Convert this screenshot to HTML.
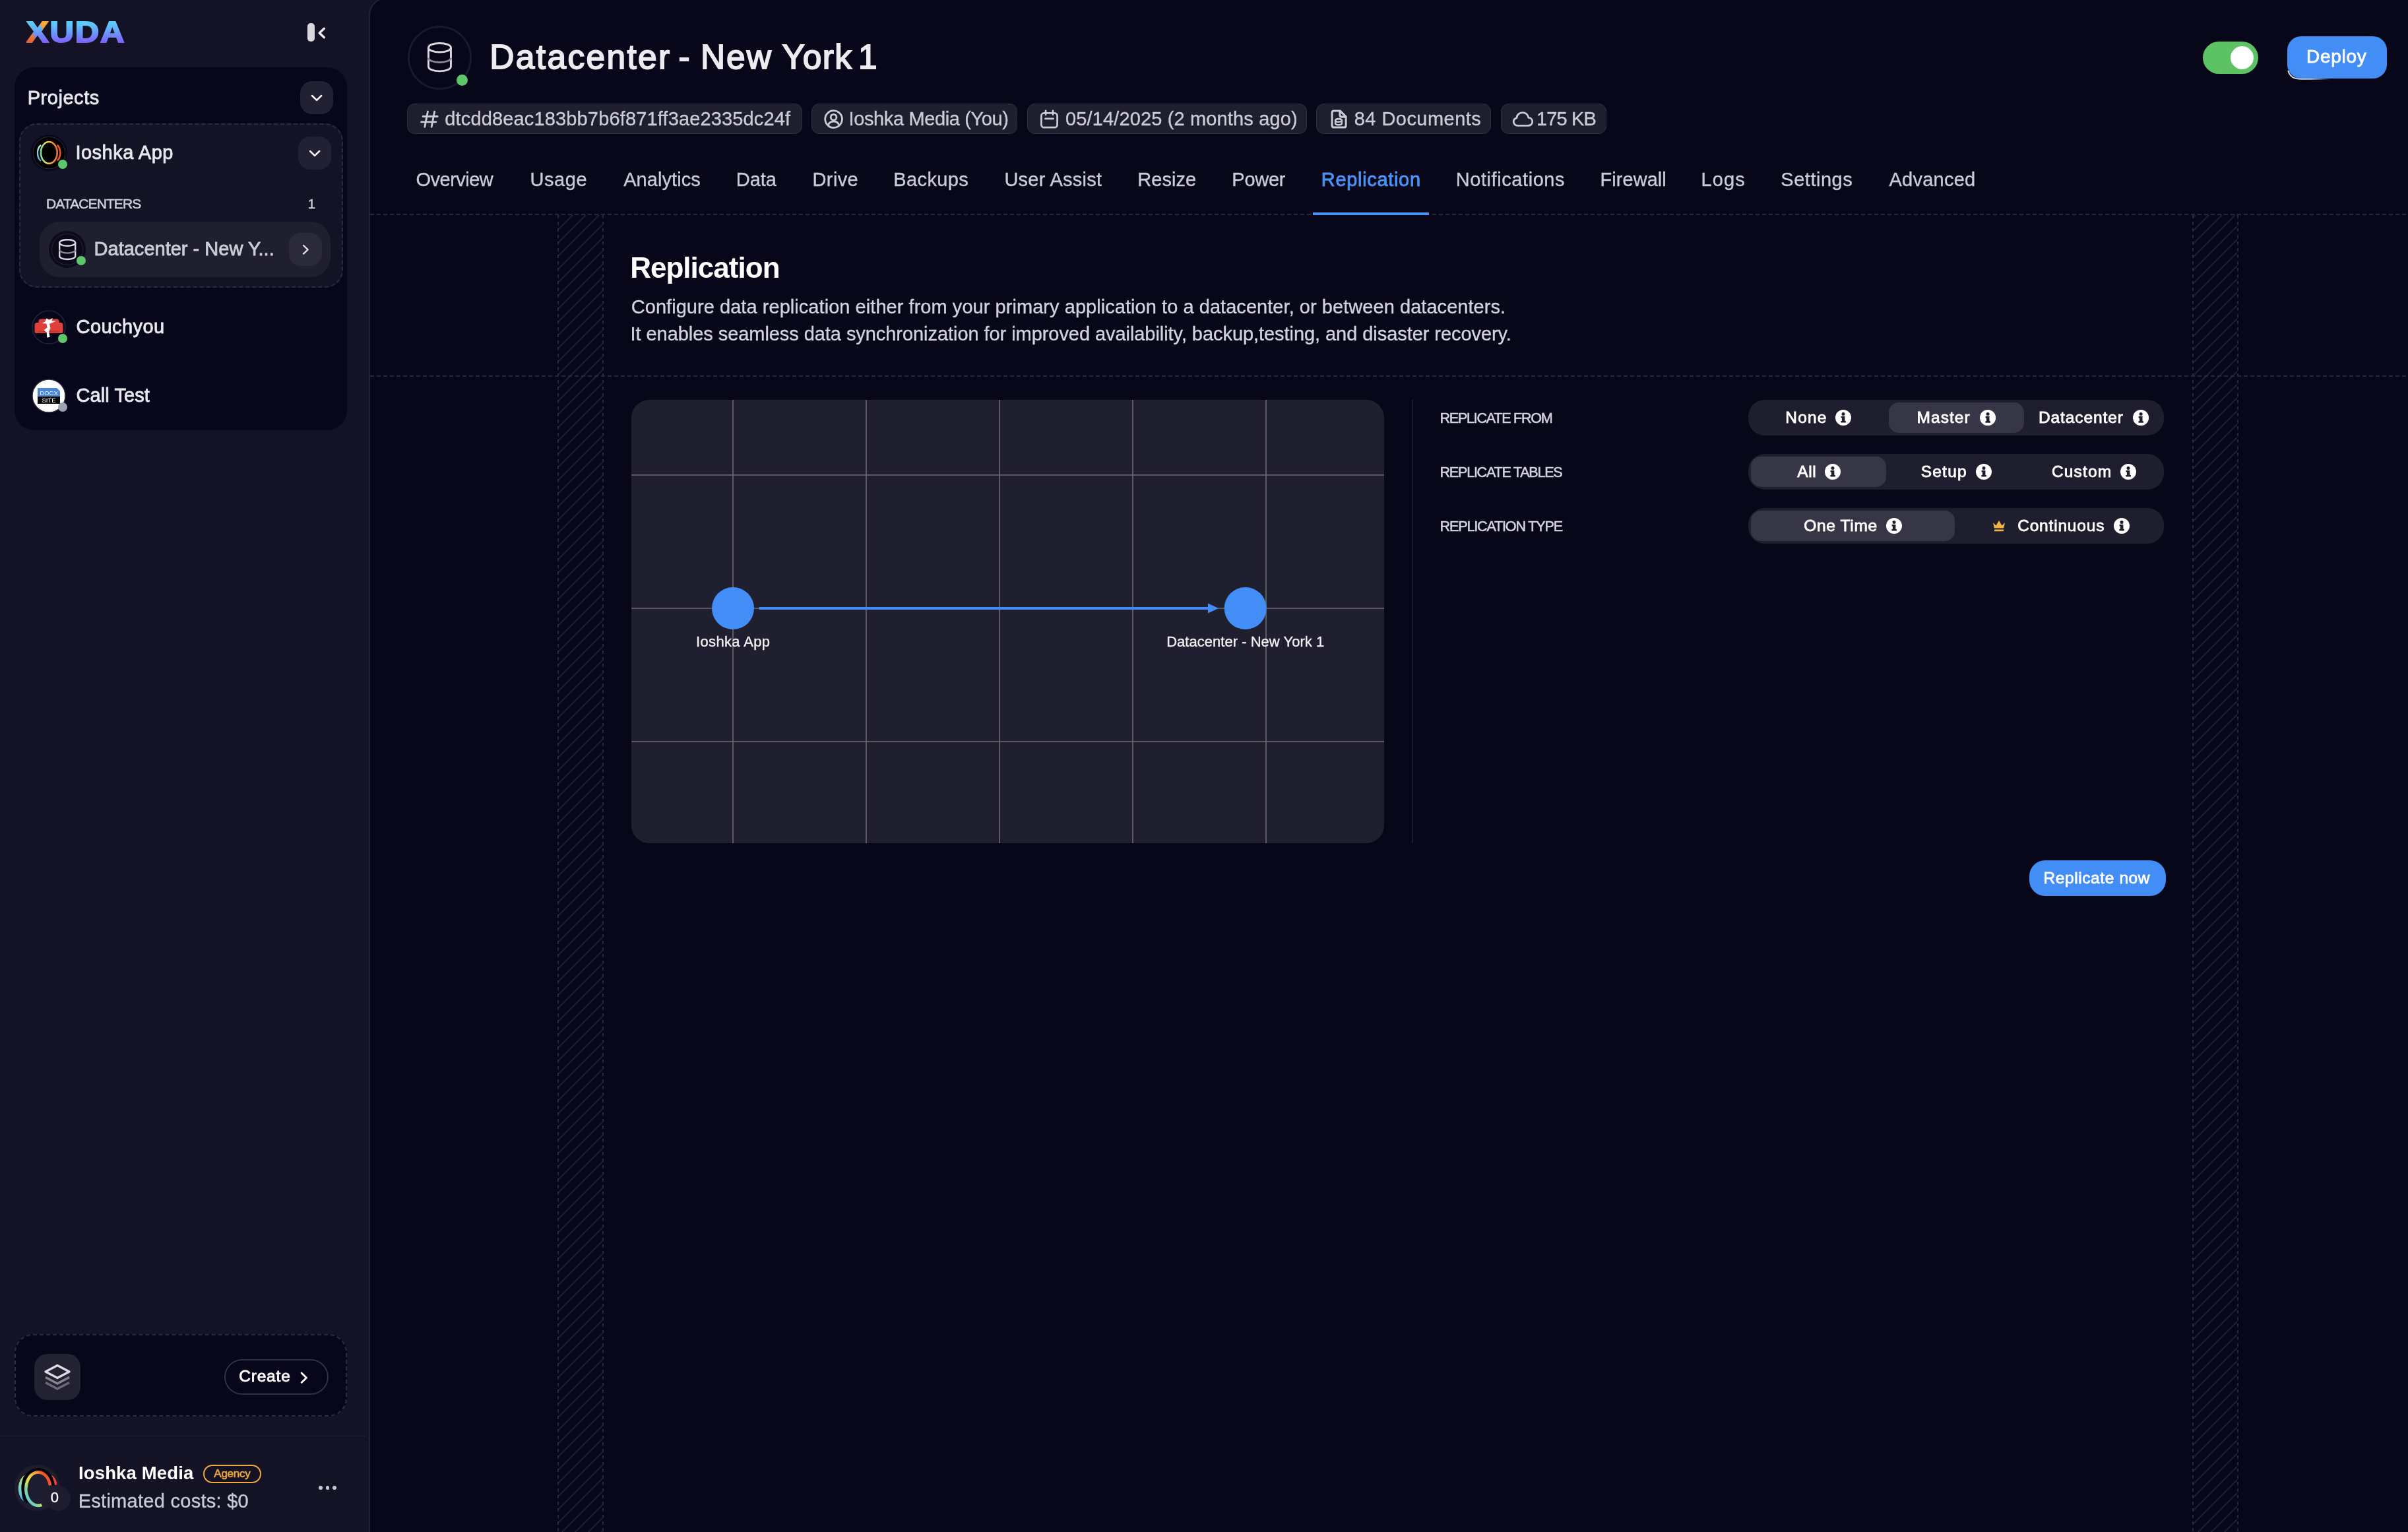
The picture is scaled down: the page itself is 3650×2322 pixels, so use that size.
<!DOCTYPE html>
<html lang="en"><head><meta charset="utf-8"><title>Datacenter - New York 1 · Replication</title>
<style>
*{box-sizing:border-box;margin:0;padding:0}
html,body{width:3650px;height:2322px;overflow:hidden;background:#141326}
body{position:relative;font-family:"Liberation Sans",sans-serif;-webkit-font-smoothing:antialiased}
.root{position:absolute;left:0;top:0;width:3650px;height:2322px;will-change:transform}
.b{position:absolute;display:block}
.t{position:absolute;line-height:1;white-space:nowrap}
.main{position:absolute;left:559px;top:-4px;width:3100px;height:2340px;background:#08071a;border:2px solid #232238;border-radius:27px 0 0 0}
.logo{position:absolute;font-weight:700;font-size:44.5px;line-height:1;white-space:nowrap;transform-origin:0 0;transform:scaleX(1.135);letter-spacing:1.6px;-webkit-text-stroke:2px transparent;paint-order:stroke fill}
.logo span{display:inline-block}
.lx{position:relative;background:linear-gradient(180deg,#f6a93b 20%,#e9613b 80%);-webkit-background-clip:text;background-clip:text;color:transparent}
.lx::before{content:"X";position:absolute;left:0;top:0;background:linear-gradient(180deg,#5cc9fb 22%,#7b62ff 82%);-webkit-background-clip:text;background-clip:text;color:transparent;clip-path:polygon(-8% 0,44% 0,110% 100%,57% 100%)}
.lr{background:linear-gradient(180deg,#5cc9fb 22%,#7b62ff 82%);-webkit-background-clip:text;background-clip:text;color:transparent}
</style></head><body>
<div class="root"><div class="main"></div>
<!-- sidebar -->
<div class="logo" style="left:40px;top:27px;"><span class="lx">X</span><span class="lr">UDA</span></div>
<div class="b " style="left:466px;top:35px;width:10.5px;height:28px;background:#d8d7df;border-radius:5px;"></div>
<svg class="b" style="left:479px;top:38px;width:18px;height:24px;" viewBox="0 0 18 24"><path d="M12.3 5.3 L5.2 12 L12.3 18.7" fill="none" stroke="#eceaf2" stroke-width="3.5" stroke-linecap="round" stroke-linejoin="round" transform="translate(0 0)"/></svg>
<div class="b " style="left:22px;top:102px;width:504px;height:550px;background:#07061a;border-radius:30px;"></div>
<div class="t" style="left:41.68px;top:133.75px;font-size:29px;color:#e9e9f0;letter-spacing:0.55px;-webkit-text-stroke:0.8px #e9e9f0;">Projects</div>
<div class="b " style="left:455px;top:123px;width:50px;height:50px;background:#222133;border-radius:18px;"></div>
<svg class="b" style="left:469.9px;top:141.55px;width:20.2px;height:12.9px;" viewBox="-10.1 -6.45 20.2 12.9"><path d="M-7.1 -3.45 L0 3.45 L7.1 -3.45" fill="none" stroke="#fff" stroke-width="2.5" stroke-linecap="round" stroke-linejoin="round"/></svg>
<div class="b " style="left:29px;top:187px;width:491px;height:249px;background:#141326;border-radius:27px;border:2px dashed #2b2a41;"></div>
<svg class="b" style="left:45px;top:203px;width:58px;height:58px;" viewBox="0 0 58 58"><defs><linearGradient id="rb1" x1="0" y1="0" x2="1" y2="0"><stop offset="0" stop-color="#7fd8a8"/><stop offset=".35" stop-color="#f3d64a"/><stop offset=".7" stop-color="#f59a3a"/><stop offset="1" stop-color="#ee6a34"/></linearGradient><linearGradient id="rb1b" x1="0" y1="0" x2="0" y2="1"><stop offset="0" stop-color="#cfeee6"/><stop offset=".5" stop-color="#7fd0e0"/><stop offset="1" stop-color="#4aa6f0"/></linearGradient></defs><circle cx="29.3" cy="28.6" r="26.6" fill="#000" stroke="#0a0920" stroke-width="2.6"/><circle cx="29.3" cy="28.6" r="24.3" fill="none" stroke="#262636" stroke-width="1.2"/><path d="M17 16.8 C10.3 22.5 10.3 35.5 17 41" fill="none" stroke="url(#rb1b)" stroke-width="2.4"/><path d="M41.8 16.8 C47.8 22.5 47.8 35 41.8 40.5" fill="none" stroke="#e9552f" stroke-width="2.6"/><ellipse cx="29.3" cy="28.4" rx="12.4" ry="16.4" fill="none" stroke="url(#rb1)" stroke-width="2.7"/></svg>
<div class="b " style="left:88px;top:241.7px;width:14px;height:14px;background:#5dc86b;border-radius:7px;"></div>
<div class="t" style="left:114.39px;top:217.45px;font-size:29px;color:#e9e9f0;letter-spacing:0.51px;-webkit-text-stroke:0.8px #e9e9f0;">Ioshka App</div>
<div class="b " style="left:452px;top:207px;width:50px;height:50px;background:#222133;border-radius:18px;"></div>
<svg class="b" style="left:466.9px;top:225.55px;width:20.2px;height:12.9px;" viewBox="-10.1 -6.45 20.2 12.9"><path d="M-7.1 -3.45 L0 3.45 L7.1 -3.45" fill="none" stroke="#fff" stroke-width="2.5" stroke-linecap="round" stroke-linejoin="round"/></svg>
<div class="t" style="left:70.07px;top:298.22px;font-size:21px;color:#cdcdd8;letter-spacing:-0.91px;-webkit-text-stroke:0.5px #cdcdd8;">DATACENTERS</div>
<div class="t" style="left:466.62px;top:298.22px;font-size:21px;color:#cdcdd8;-webkit-text-stroke:0.35px #cdcdd8;">1</div>
<div class="b " style="left:60px;top:336px;width:441px;height:84px;background:#201f30;border-radius:30px;"></div>
<div class="b " style="left:74px;top:350px;width:56px;height:55.5px;background:#0c0b1c;border-radius:28px;"></div>
<div class="b " style="left:77.6px;top:353.6px;width:48.8px;height:48.3px;background:#0b0a1b;border-radius:25px;border:1.4px solid #282739;"></div>
<svg class="b" style="left:88.8px;top:362.2px;width:26.4px;height:32.2px;overflow:visible;" viewBox="0 0 26.4 32.2"><path d="M1.2 6 V26.2 A12 4.8 0 0 0 25.2 26.2 V6" fill="none" stroke="#d9d9df" stroke-width="2.4"/><path d="M1.2 16.82 A12 4.8 0 0 0 25.2 16.82" fill="none" stroke="#8b8a96" stroke-width="2.4"/><ellipse cx="13.2" cy="6" rx="12" ry="4.8" fill="none" stroke="#d9d9df" stroke-width="2.4"/></svg>
<div class="b " style="left:115.8px;top:387.8px;width:14px;height:14px;background:#5dc86b;border-radius:7px;"></div>
<div class="t" style="left:142.58px;top:363.45px;font-size:29px;color:#cdcdd8;letter-spacing:0.01px;-webkit-text-stroke:0.8px #cdcdd8;">Datacenter - New Y...</div>
<div class="b " style="left:438px;top:353px;width:50px;height:50px;background:#2b2a3b;border-radius:18px;"></div>
<svg class="b" style="left:456.85px;top:369px;width:12.7px;height:18.6px;" viewBox="-6.35 -9.3 12.7 18.6"><path d="M-3.35 -6.3 L3.35 0 L-3.35 6.3" fill="none" stroke="#e4e4ea" stroke-width="2.3" stroke-linecap="round" stroke-linejoin="round"/></svg>
<svg class="b" style="left:48px;top:470px;width:52px;height:52px;" viewBox="0 0 52 52"><circle cx="26" cy="26" r="25" fill="#08071a" stroke="#26253a" stroke-width="1.5"/><path d="M4.5 22.5 q0 -3.5 3.5 -3.5 h2.5 v-2 q0 -3.5 3.5 -3.5 h24 q3.5 0 3.5 3.5 v2 h2.5 q3.5 0 3.5 3.5 v10 q0 2.5 -2.5 2.5 h-38 q-2.5 0 -2.5 -2.5z" fill="#e0403b"/><path d="M10 31 h32 v3 h-32z" fill="#c93632"/><path d="M22.5 12.5 l4 2.5 l5.5 -3 l-1.6 4.2 l6 .8 l-6.2 2.6 l-3.2 1.2 l1.4 6.8 l-2.4 5 l1.6 8.2 l-4.2 1 l-.8 -8.2 l-4.2 -3 l5.2 -4 l-1.2 -6 l-7 -.6 l5 -2.6z" fill="#fff"/></svg>
<div class="b " style="left:88px;top:505.6px;width:14px;height:14px;background:#5dc86b;border-radius:7px;"></div>
<div class="t" style="left:115.55px;top:481.45px;font-size:29px;color:#e9e9f0;letter-spacing:0.43px;-webkit-text-stroke:0.8px #e9e9f0;">Couchyou</div>
<svg class="b" style="left:48px;top:573.6px;width:52px;height:52px;" viewBox="0 0 52 52"><circle cx="26" cy="26" r="25" fill="#fff" stroke="#2b2a3b" stroke-width="1.5"/><path d="M9 14 h29 l5 5 v8 h-34z" fill="#4a86d2"/><rect x="9" y="27" width="34" height="11" fill="#0b0b0b"/><text x="26" y="25" font-family="Liberation Sans, sans-serif" font-size="9.5" fill="#e8f0ff" text-anchor="middle">DOCX</text><text x="26" y="36.3" font-family="Liberation Sans, sans-serif" font-size="9.5" fill="#fff" text-anchor="middle">SITE</text></svg>
<div class="b " style="left:88px;top:610px;width:14px;height:14px;background:#9ea3b3;border-radius:7px;"></div>
<div class="t" style="left:115.55px;top:585.45px;font-size:29px;color:#e9e9f0;letter-spacing:0.08px;-webkit-text-stroke:0.8px #e9e9f0;">Call Test</div>
<div class="b " style="left:22.4px;top:2022.4px;width:503.6px;height:125.1px;background:#07061a;border-radius:28px;border:2px dashed #2c2b42;"></div>
<div class="b " style="left:52px;top:2052px;width:70px;height:70px;background:#232232;border-radius:20px;"></div>
<svg class="b" style="left:66px;top:2066px;width:42px;height:42px;overflow:visible;" viewBox="0 0 42 42"><path d="M21 3.5 L39 13 L21 22.5 L3 13 Z" fill="none" stroke="#dcdce2" stroke-width="3.4" stroke-linejoin="round"/><path d="M3 21.5 L21 31 L39 21.5" fill="none" stroke="#85848f" stroke-width="3.6"/><path d="M3 29.5 L21 39 L39 29.5" fill="none" stroke="#6a6975" stroke-width="3.6"/></svg>
<div class="b " style="left:340px;top:2060px;width:158px;height:53.6px;border-radius:27px;border:2px solid #32314a;"></div>
<div class="t" style="left:362.18px;top:2073.86px;font-size:24.5px;color:#fff;letter-spacing:0.81px;-webkit-text-stroke:0.8px #fff;">Create</div>
<svg class="b" style="left:453.9px;top:2078.3px;width:13.6px;height:20.4px;" viewBox="-6.8 -10.2 13.6 20.4"><path d="M-3.8 -7.2 L3.8 0 L-3.8 7.2" fill="none" stroke="#fff" stroke-width="2.8" stroke-linecap="round" stroke-linejoin="round"/></svg>
<div class="b " style="left:0px;top:2175.6px;width:553.7px;height:1.6px;background:#24233a;"></div>
<div class="b " style="left:22.2px;top:2220.2px;width:69px;height:69.6px;background:#1e1d2f;border-radius:35px;"></div>
<div class="b " style="left:69.5px;top:2252px;width:37px;height:38px;background:#1e1d2f;border-radius:19px;"></div>
<svg class="b" style="left:10px;top:2205px;width:120px;height:100px;" viewBox="0 0 120 100"><defs><linearGradient id="ua" x1="0.05" y1="0.95" x2="0.95" y2="0.1"><stop offset="0" stop-color="#5cc8d8"/><stop offset=".14" stop-color="#6fd0c0"/><stop offset=".25" stop-color="#90d890"/><stop offset=".36" stop-color="#d6e050"/><stop offset=".5" stop-color="#f5d23e"/><stop offset=".77" stop-color="#f5903a"/><stop offset=".86" stop-color="#f0552e"/></linearGradient><linearGradient id="ub" x1="0" y1="0" x2="0" y2="1"><stop offset="0" stop-color="#b4da6e"/><stop offset=".45" stop-color="#7fd6b8"/><stop offset="1" stop-color="#4fb0f4"/></linearGradient></defs><path d="M27.4 30.7 C15 38 15 63 26.1 70.2 C21.3 63 21.3 39 27.4 30.7 Z" fill="url(#ub)"/><path d="M67.9 30.7 C73 33.5 76 39 76.4 45.6 L71.4 45.6 C71.2 40 69.3 35.5 65.5 32.4 Z" fill="#ee4a30"/><path d="M32.5 72 C26.5 66 24.8 58 24.8 51 A22.9 26.2 0 0 1 70.6 46.2" fill="none" stroke="#000" stroke-width="4.4"/><path d="M53.3 75.9 A18.6 25.3 0 1 1 66.1 46.3" fill="none" stroke="url(#ua)" stroke-width="4.6"/></svg>
<div class="t" style="left:76.84px;top:2259.38px;font-size:22px;color:#fff;-webkit-text-stroke:0.35px #fff;">0</div>
<div class="t" style="left:119.01px;top:2218.72px;font-size:27.5px;color:#fff;font-weight:700;letter-spacing:0.14px;">Ioshka Media</div>
<div class="b " style="left:307.7px;top:2219.7px;width:88.3px;height:28.3px;border-radius:15px;border:2.5px solid #f0a93b;"></div>
<div class="t" style="left:324.3px;top:2225.01px;font-size:17px;color:#f0a93b;letter-spacing:-0.26px;-webkit-text-stroke:0.6px #f0a93b;">Agency</div>
<div class="t" style="left:118.66px;top:2260.75px;font-size:29px;color:#c9c9d6;letter-spacing:0.28px;-webkit-text-stroke:0.35px #c9c9d6;">Estimated costs: $0</div>
<div class="b " style="left:483.1px;top:2252.1px;width:5.8px;height:5.8px;background:#c9c9d6;border-radius:3px;"></div>
<div class="b " style="left:493.7px;top:2252.1px;width:5.8px;height:5.8px;background:#c9c9d6;border-radius:3px;"></div>
<div class="b " style="left:504.3px;top:2252.1px;width:5.8px;height:5.8px;background:#c9c9d6;border-radius:3px;"></div>
<!-- header -->
<div class="b " style="left:618px;top:38.5px;width:97px;height:97px;background:#08071a;border-radius:49px;border:3px solid #1a192d;"></div>
<svg class="b" style="left:647.6px;top:64.3px;width:36.9px;height:45.3px;overflow:visible;" viewBox="0 0 36.9 45.3"><path d="M1.45 8.25 V37.05 A17 6.8 0 0 0 35.45 37.05 V8.25" fill="none" stroke="#d9d9df" stroke-width="2.9"/><path d="M1.45 23.67 A17 6.8 0 0 0 35.45 23.67" fill="none" stroke="#8b8a96" stroke-width="2.9"/><ellipse cx="18.45" cy="8.25" rx="17" ry="6.8" fill="none" stroke="#d9d9df" stroke-width="2.9"/></svg>
<div class="b " style="left:691.7px;top:112.6px;width:17.6px;height:17.6px;background:#5dc86b;border-radius:9px;"></div>
<div class="t" style="left:742.28px;top:61.11px;font-size:51.5px;color:#ebebf0;letter-spacing:2.34px;-webkit-text-stroke:1.8px #ebebf0;">Datacenter</div>
<div class="t" style="left:1028.58px;top:61.11px;font-size:51.5px;color:#ebebf0;-webkit-text-stroke:1.8px #ebebf0;">-</div>
<div class="t" style="left:1061.98px;top:61.11px;font-size:51.5px;color:#ebebf0;letter-spacing:1.93px;-webkit-text-stroke:1.8px #ebebf0;">New</div>
<div class="t" style="left:1185.61px;top:61.11px;font-size:51.5px;color:#ebebf0;letter-spacing:1.43px;-webkit-text-stroke:1.8px #ebebf0;">York</div>
<div class="t" style="left:1301.04px;top:61.11px;font-size:51.5px;color:#ebebf0;-webkit-text-stroke:1.8px #ebebf0;">1</div>
<div class="b " style="left:3339px;top:63px;width:84px;height:49px;background:#5dc264;border-radius:25px;"></div>
<div class="b " style="left:3381px;top:70px;width:35px;height:35px;background:#fff;border-radius:18px;"></div>
<div class="b " style="left:3467px;top:55px;width:151px;height:64.3px;background:#428ef6;border-radius:21px;box-shadow:-2px 2.5px 0 -1px rgba(255,255,255,.0);"></div>
<svg class="b" style="left:3466px;top:96px;width:74px;height:26px;" viewBox="0 0 74 26"><defs><linearGradient id="dg" x1="0" y1="0" x2="1" y2="0"><stop offset="0" stop-color="#fff" stop-opacity=".9"/><stop offset=".55" stop-color="#fff" stop-opacity=".75"/><stop offset="1" stop-color="#fff" stop-opacity="0"/></linearGradient></defs><path d="M2.2 11 C4.5 20 11 23.9 22 23.9 L66 23.9" fill="none" stroke="url(#dg)" stroke-width="1.8"/></svg>
<div class="t" style="left:3495.96px;top:72.3px;font-size:28px;color:#fff;letter-spacing:0.72px;-webkit-text-stroke:0.8px #fff;">Deploy</div>
<div class="b " style="left:617.2px;top:157.2px;width:598.5px;height:45.8px;background:#1f1e2f;border-radius:11.5px;border:1.6px solid #2f2e44;"></div>
<svg class="b" style="left:636.6px;top:166.6px;width:27.4px;height:27.4px;overflow:visible;" viewBox="0 0 24 24"><path d="M10 1.8 L6 22.2 M19 1.8 L15 22.2 M3.6 8.3 H23 M1.4 15.7 H20.8" fill="none" stroke="#cbcbd6" stroke-width="2.5" stroke-linecap="round"/></svg>
<div class="t" style="left:674.31px;top:166.05px;font-size:29px;color:#cbcbd6;letter-spacing:0.15px;-webkit-text-stroke:0.35px #cbcbd6;">dtcdd8eac183bb7b6f871ff3ae2335dc24f</div>
<div class="b " style="left:1230.2px;top:157.2px;width:312.2px;height:45.8px;background:#1f1e2f;border-radius:11.5px;border:1.6px solid #2f2e44;"></div>
<svg class="b" style="left:1248.8px;top:165.5px;width:29.2px;height:29.2px;overflow:visible;" viewBox="0 0 24 24"><circle cx="12" cy="12" r="10.6" fill="none" stroke="#cbcbd6" stroke-width="2.3"/><circle cx="12" cy="9.6" r="3.6" fill="none" stroke="#cbcbd6" stroke-width="2.3"/><path d="M5 19.5 C6.5 15.8 9 14.8 12 14.8 S17.5 15.8 19 19.5" fill="none" stroke="#cbcbd6" stroke-width="2.3"/></svg>
<div class="t" style="left:1286.57px;top:166.05px;font-size:29px;color:#cbcbd6;letter-spacing:-0.38px;-webkit-text-stroke:0.35px #cbcbd6;">Ioshka Media (You)</div>
<div class="b " style="left:1557px;top:157.2px;width:423.6px;height:45.8px;background:#1f1e2f;border-radius:11.5px;border:1.6px solid #2f2e44;"></div>
<svg class="b" style="left:1575.5px;top:165.8px;width:29px;height:29px;overflow:visible;" viewBox="0 0 24 24"><rect x="2" y="4.5" width="20" height="18" rx="3.5" fill="none" stroke="#cbcbd6" stroke-width="2.3"/><path d="M7.5 1.5 V6.5 M16.5 1.5 V6.5 M7 11.5 H17" fill="none" stroke="#cbcbd6" stroke-width="2.3" stroke-linecap="round"/></svg>
<div class="t" style="left:1615.02px;top:166.05px;font-size:29px;color:#cbcbd6;letter-spacing:0.14px;-webkit-text-stroke:0.35px #cbcbd6;">05/14/2025 (2 months ago)</div>
<div class="b " style="left:1995px;top:157.2px;width:265px;height:45.8px;background:#1f1e2f;border-radius:11.5px;border:1.6px solid #2f2e44;"></div>
<svg class="b" style="left:2014.5px;top:165.5px;width:29px;height:29px;overflow:visible;" viewBox="0 0 24 24"><path d="M3.4 4 Q3.4 1.6 5.8 1.6 H13.4 L20.8 9 V20 Q20.8 22.4 18.4 22.4 H5.8 Q3.4 22.4 3.4 20 Z" fill="none" stroke="#cbcbd6" stroke-width="2.5" stroke-linejoin="round"/><path d="M13.2 1.8 V7 Q13.2 9.2 15.4 9.2 H20.6" fill="none" stroke="#cbcbd6" stroke-width="2.5" stroke-linejoin="round"/><ellipse cx="11.6" cy="13.6" rx="4" ry="1.9" fill="none" stroke="#cbcbd6" stroke-width="2.1"/><path d="M7.6 13.6 V17.2 C7.6 18.5 9.3 19.3 11.6 19.3 S15.6 18.5 15.6 17.2 V13.6" fill="none" stroke="#cbcbd6" stroke-width="2.1"/></svg>
<div class="t" style="left:2052.67px;top:166.05px;font-size:29px;color:#cbcbd6;letter-spacing:0.47px;-webkit-text-stroke:0.35px #cbcbd6;">84 Documents</div>
<div class="b " style="left:2275px;top:157.2px;width:159.7px;height:45.8px;background:#1f1e2f;border-radius:11.5px;border:1.6px solid #2f2e44;"></div>
<svg class="b" style="left:2291.5px;top:164.5px;width:33px;height:31px;overflow:visible;" viewBox="0 0 26 25"><path d="M7.5 20.5 H19.2 C22.4 20.5 24.5 18.3 24.5 15.6 C24.5 12.9 22.4 10.9 19.8 10.8 C19 6.8 15.9 4.5 12.5 4.5 C8.6 4.5 5.5 7.3 5.2 11.2 C2.9 11.8 1.5 13.7 1.5 15.8 C1.5 18.5 3.8 20.5 6.3 20.5 Z" fill="none" stroke="#cbcbd6" stroke-width="2.3" stroke-linejoin="round"/></svg>
<div class="t" style="left:2329px;top:166.05px;font-size:29px;color:#cbcbd6;letter-spacing:-0.87px;-webkit-text-stroke:0.35px #cbcbd6;">175 KB</div>
<div class="t" style="left:630.57px;top:257.75px;font-size:29px;color:#cbcbd6;letter-spacing:-0.53px;-webkit-text-stroke:0.35px #cbcbd6;">Overview</div>
<div class="t" style="left:803.4px;top:257.75px;font-size:29px;color:#cbcbd6;letter-spacing:0.61px;-webkit-text-stroke:0.35px #cbcbd6;">Usage</div>
<div class="t" style="left:945.17px;top:257.75px;font-size:29px;color:#cbcbd6;letter-spacing:0.08px;-webkit-text-stroke:0.35px #cbcbd6;">Analytics</div>
<div class="t" style="left:1115.86px;top:257.75px;font-size:29px;color:#cbcbd6;letter-spacing:-0.07px;-webkit-text-stroke:0.35px #cbcbd6;">Data</div>
<div class="t" style="left:1231.56px;top:257.75px;font-size:29px;color:#cbcbd6;letter-spacing:0.38px;-webkit-text-stroke:0.35px #cbcbd6;">Drive</div>
<div class="t" style="left:1354.26px;top:257.75px;font-size:29px;color:#cbcbd6;letter-spacing:0.39px;-webkit-text-stroke:0.35px #cbcbd6;">Backups</div>
<div class="t" style="left:1522.4px;top:257.75px;font-size:29px;color:#cbcbd6;letter-spacing:0.26px;-webkit-text-stroke:0.35px #cbcbd6;">User Assist</div>
<div class="t" style="left:1724.36px;top:257.75px;font-size:29px;color:#cbcbd6;letter-spacing:0.04px;-webkit-text-stroke:0.35px #cbcbd6;">Resize</div>
<div class="t" style="left:1867.36px;top:257.75px;font-size:29px;color:#cbcbd6;letter-spacing:-0.29px;-webkit-text-stroke:0.35px #cbcbd6;">Power</div>
<div class="t" style="left:2002.78px;top:257.75px;font-size:29px;color:#4a93f7;letter-spacing:0.68px;-webkit-text-stroke:0.8px #4a93f7;">Replication</div>
<div class="t" style="left:2206.66px;top:257.75px;font-size:29px;color:#cbcbd6;letter-spacing:0.58px;-webkit-text-stroke:0.35px #cbcbd6;">Notifications</div>
<div class="t" style="left:2425.55px;top:257.75px;font-size:29px;color:#cbcbd6;letter-spacing:0.04px;-webkit-text-stroke:0.35px #cbcbd6;">Firewall</div>
<div class="t" style="left:2578.45px;top:257.75px;font-size:29px;color:#cbcbd6;letter-spacing:1.15px;-webkit-text-stroke:0.35px #cbcbd6;">Logs</div>
<div class="t" style="left:2699.27px;top:257.75px;font-size:29px;color:#cbcbd6;letter-spacing:0.53px;-webkit-text-stroke:0.35px #cbcbd6;">Settings</div>
<div class="t" style="left:2863.48px;top:257.75px;font-size:29px;color:#cbcbd6;letter-spacing:0.25px;-webkit-text-stroke:0.35px #cbcbd6;">Advanced</div>
<div class="b " style="left:1990px;top:322px;width:176px;height:4.2px;background:#4a90f5;z-index:3;"></div>
<!-- content -->
<div class="b " style="left:561px;top:324.3px;width:3089px;height:1.4px;background:repeating-linear-gradient(90deg,#28273c 0,#28273c 6px,transparent 6px,transparent 10px);"></div>
<div class="b " style="left:561px;top:569.3px;width:3089px;height:1.4px;background:repeating-linear-gradient(90deg,#28273c 0,#28273c 6px,transparent 6px,transparent 10px);"></div>
<svg class="b" style="left:847px;top:326px;width:66px;height:1996px;" viewBox="0 0 66 1996"><defs><pattern id="hp1" width="20" height="20" patternUnits="userSpaceOnUse"><path d="M6 -5 L-5 6 M26 -5 L-5 26" stroke="#27263b" stroke-width="1.5" fill="none"/></pattern></defs><rect x="0" y="0" width="66" height="1996" fill="url(#hp1)"/></svg>
<svg class="b" style="left:3325px;top:326px;width:66px;height:1996px;" viewBox="0 0 66 1996"><defs><pattern id="hp2" width="20" height="20" patternUnits="userSpaceOnUse"><path d="M8 -5 L-5 8 M28 -5 L-5 28" stroke="#27263b" stroke-width="1.5" fill="none"/></pattern></defs><rect x="0" y="0" width="66" height="1996" fill="url(#hp2)"/></svg>
<div class="b " style="left:845.3px;top:326px;width:1.4px;height:1996px;background:repeating-linear-gradient(180deg,#28273c 0,#28273c 5px,transparent 5px,transparent 10px);"></div>
<div class="b " style="left:913.3px;top:326px;width:1.4px;height:1996px;background:repeating-linear-gradient(180deg,#28273c 0,#28273c 5px,transparent 5px,transparent 10px);"></div>
<div class="b " style="left:3323.3px;top:326px;width:1.4px;height:1996px;background:repeating-linear-gradient(180deg,#28273c 0,#28273c 5px,transparent 5px,transparent 10px);"></div>
<div class="b " style="left:3391.3px;top:326px;width:1.4px;height:1996px;background:repeating-linear-gradient(180deg,#28273c 0,#28273c 5px,transparent 5px,transparent 10px);"></div>
<div class="t" style="left:955.14px;top:384.45px;font-size:44px;color:#fff;font-weight:700;letter-spacing:-0.97px;">Replication</div>
<div class="t" style="left:956.73px;top:450.95px;font-size:29px;color:#d2d2dc;letter-spacing:0.05px;-webkit-text-stroke:0.35px #d2d2dc;">Configure data replication either from your primary application to a datacenter, or between datacenters.</div>
<div class="t" style="left:955.57px;top:492.45px;font-size:29px;color:#d2d2dc;letter-spacing:-0.06px;-webkit-text-stroke:0.35px #d2d2dc;">It enables seamless data synchronization for improved availability, backup,testing, and disaster recovery.</div>
<svg class="b" style="left:957px;top:606px;width:1141px;height:672px;background:#201f2f;border-radius:27px;" viewBox="0 0 1141 672"><g stroke="#6c6c70" stroke-width="1.6"><line x1="154" y1="0" x2="154" y2="672"/><line x1="356" y1="0" x2="356" y2="672"/><line x1="558" y1="0" x2="558" y2="672"/><line x1="760" y1="0" x2="760" y2="672"/><line x1="962" y1="0" x2="962" y2="672"/><line x1="0" y1="114" x2="1141" y2="114"/><line x1="0" y1="316" x2="1141" y2="316"/><line x1="0" y1="518" x2="1141" y2="518"/></g><line x1="193.8" y1="316" x2="876" y2="316" stroke="#428ef6" stroke-width="4"/><path d="M874 308.4 L890 316 L874 323.6 Z" fill="#428ef6"/><circle cx="154" cy="316" r="32" fill="#428ef6"/><circle cx="930.7" cy="316" r="32" fill="#428ef6"/><text x="154" y="374.4" text-anchor="middle" font-family="Liberation Sans, sans-serif" font-size="22" fill="#f2f2f6" stroke="#f2f2f6" stroke-width=".35" textLength="112" lengthAdjust="spacing">Ioshka App</text><text x="930.7" y="374.2" text-anchor="middle" font-family="Liberation Sans, sans-serif" font-size="22" fill="#f2f2f6" stroke="#f2f2f6" stroke-width=".35" textLength="239" lengthAdjust="spacing">Datacenter - New York 1</text></svg>
<div class="b " style="left:2140px;top:606px;width:1.6px;height:672px;background:#1d1c2f;"></div>
<div class="t" style="left:2182.55px;top:623.42px;font-size:21.6px;color:#d4d4de;letter-spacing:-1.29px;-webkit-text-stroke:0.55px #d4d4de;">REPLICATE FROM</div>
<div class="t" style="left:2182.55px;top:705.12px;font-size:21.6px;color:#d4d4de;letter-spacing:-1.27px;-webkit-text-stroke:0.55px #d4d4de;">REPLICATE TABLES</div>
<div class="t" style="left:2182.55px;top:786.92px;font-size:21.6px;color:#d4d4de;letter-spacing:-1.19px;-webkit-text-stroke:0.55px #d4d4de;">REPLICATION TYPE</div>
<div class="b " style="left:2650px;top:606px;width:630px;height:54px;background:#1f1e2f;border-radius:25px;"></div>
<div class="b " style="left:2863px;top:610px;width:204.7px;height:46px;background:#373647;border-radius:15px;"></div>
<div class="t" style="left:2706.24px;top:620.86px;font-size:24.5px;color:#fff;letter-spacing:1.2px;-webkit-text-stroke:0.8px #fff;">None</div>
<svg class="b" style="left:2782px;top:621px;width:24px;height:24px;" viewBox="0 0 24 24"><circle cx="12" cy="12" r="12" fill="#fff"/><circle cx="12" cy="6.5" r="2.5" fill="#1f1e2f"/><path d="M8.6 10 H14.4 V17 H15.9 V19.6 H8.4 V17 H9.9 V12.6 H8.6 Z" fill="#1f1e2f"/></svg>
<div class="t" style="left:2905.44px;top:620.86px;font-size:24.5px;color:#fff;letter-spacing:1.08px;-webkit-text-stroke:0.8px #fff;">Master</div>
<svg class="b" style="left:3000.8px;top:620.9px;width:24.2px;height:24.2px;" viewBox="0 0 24 24"><circle cx="12" cy="12" r="12" fill="#fff"/><circle cx="12" cy="6.5" r="2.5" fill="#1f1e2f"/><path d="M8.6 10 H14.4 V17 H15.9 V19.6 H8.4 V17 H9.9 V12.6 H8.6 Z" fill="#1f1e2f"/></svg>
<div class="t" style="left:3089.94px;top:620.86px;font-size:24.5px;color:#fff;letter-spacing:0.91px;-webkit-text-stroke:0.8px #fff;">Datacenter</div>
<svg class="b" style="left:3232.8px;top:620.9px;width:24.2px;height:24.2px;" viewBox="0 0 24 24"><circle cx="12" cy="12" r="12" fill="#fff"/><circle cx="12" cy="6.5" r="2.5" fill="#1f1e2f"/><path d="M8.6 10 H14.4 V17 H15.9 V19.6 H8.4 V17 H9.9 V12.6 H8.6 Z" fill="#1f1e2f"/></svg>
<div class="b " style="left:2650px;top:688.4px;width:630px;height:53.6px;background:#1f1e2f;border-radius:25px;"></div>
<div class="b " style="left:2653.7px;top:692px;width:205.3px;height:46.4px;background:#373647;border-radius:15px;"></div>
<div class="t" style="left:2724.2px;top:703.06px;font-size:24.5px;color:#fff;letter-spacing:0.6px;-webkit-text-stroke:0.8px #fff;">All</div>
<svg class="b" style="left:2766px;top:703.2px;width:24px;height:24px;" viewBox="0 0 24 24"><circle cx="12" cy="12" r="12" fill="#fff"/><circle cx="12" cy="6.5" r="2.5" fill="#1f1e2f"/><path d="M8.6 10 H14.4 V17 H15.9 V19.6 H8.4 V17 H9.9 V12.6 H8.6 Z" fill="#1f1e2f"/></svg>
<div class="t" style="left:2911.7px;top:703.06px;font-size:24.5px;color:#fff;letter-spacing:1.23px;-webkit-text-stroke:0.8px #fff;">Setup</div>
<svg class="b" style="left:2995px;top:703.2px;width:24px;height:24px;" viewBox="0 0 24 24"><circle cx="12" cy="12" r="12" fill="#fff"/><circle cx="12" cy="6.5" r="2.5" fill="#1f1e2f"/><path d="M8.6 10 H14.4 V17 H15.9 V19.6 H8.4 V17 H9.9 V12.6 H8.6 Z" fill="#1f1e2f"/></svg>
<div class="t" style="left:3109.88px;top:703.06px;font-size:24.5px;color:#fff;letter-spacing:1.18px;-webkit-text-stroke:0.8px #fff;">Custom</div>
<svg class="b" style="left:3214px;top:703.2px;width:24px;height:24px;" viewBox="0 0 24 24"><circle cx="12" cy="12" r="12" fill="#fff"/><circle cx="12" cy="6.5" r="2.5" fill="#1f1e2f"/><path d="M8.6 10 H14.4 V17 H15.9 V19.6 H8.4 V17 H9.9 V12.6 H8.6 Z" fill="#1f1e2f"/></svg>
<div class="b " style="left:2650px;top:770px;width:630px;height:54px;background:#1f1e2f;border-radius:25px;"></div>
<div class="b " style="left:2653.7px;top:774px;width:309.3px;height:46.4px;background:#373647;border-radius:15px;"></div>
<div class="t" style="left:2734.3px;top:785.06px;font-size:24.5px;color:#fff;letter-spacing:0.66px;-webkit-text-stroke:0.8px #fff;">One Time</div>
<svg class="b" style="left:2859px;top:785.2px;width:24px;height:24px;" viewBox="0 0 24 24"><circle cx="12" cy="12" r="12" fill="#fff"/><circle cx="12" cy="6.5" r="2.5" fill="#1f1e2f"/><path d="M8.6 10 H14.4 V17 H15.9 V19.6 H8.4 V17 H9.9 V12.6 H8.6 Z" fill="#1f1e2f"/></svg>
<svg class="b" style="left:3020px;top:787.5px;width:20px;height:18px;" viewBox="0 0 20 18"><path d="M1 4.2 L5.6 8.6 L10 1 L14.4 8.6 L19 4.2 L17 12.6 H3 Z" fill="#f2b53f"/><rect x="3" y="14.4" width="14" height="2.9" rx=".6" fill="#f2b53f"/></svg>
<div class="t" style="left:3058.18px;top:785.06px;font-size:24.5px;color:#fff;letter-spacing:0.81px;-webkit-text-stroke:0.8px #fff;">Continuous</div>
<svg class="b" style="left:3204px;top:785.2px;width:24px;height:24px;" viewBox="0 0 24 24"><circle cx="12" cy="12" r="12" fill="#fff"/><circle cx="12" cy="6.5" r="2.5" fill="#1f1e2f"/><path d="M8.6 10 H14.4 V17 H15.9 V19.6 H8.4 V17 H9.9 V12.6 H8.6 Z" fill="#1f1e2f"/></svg>
<div class="b " style="left:3075.5px;top:1304.3px;width:207.5px;height:53.7px;background:#428ef6;border-radius:24px;"></div>
<div class="t" style="left:3097.44px;top:1318.76px;font-size:24.5px;color:#fff;letter-spacing:0.6px;-webkit-text-stroke:0.8px #fff;">Replicate now</div>
</div></body></html>
